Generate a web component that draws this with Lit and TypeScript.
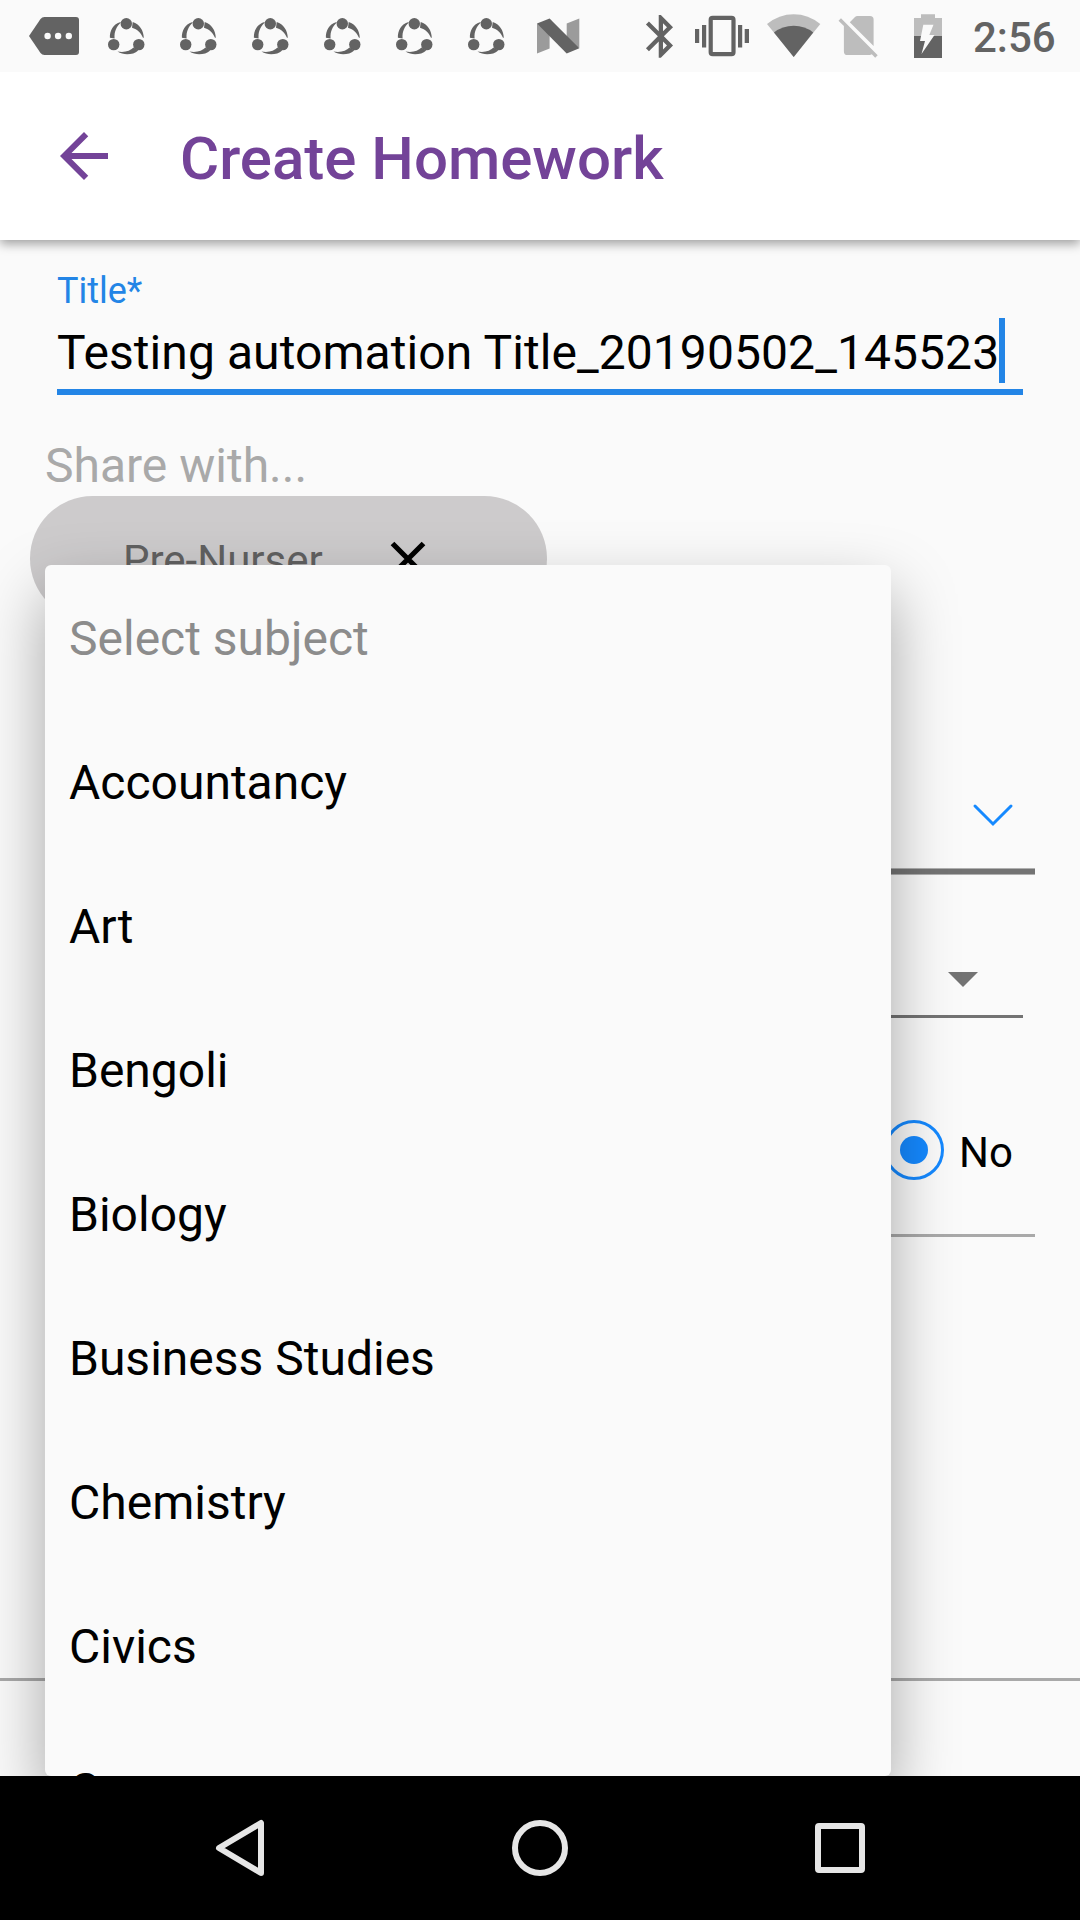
import { LitElement, html, css, svg } from "lit";
import { customElement } from "lit/decorators.js";

const subjects = [
  "Accountancy",
  "Art",
  "Bengoli",
  "Biology",
  "Business Studies",
  "Chemistry",
  "Civics",
  "Commerce",
];

const shareGlyph = (x: number) => svg`
  <g transform="translate(${x} 18)" fill="#636363">
    <circle cx="18.3" cy="5.8" r="5.7" />
    <circle cx="5.7" cy="26.6" r="5.7" />
    <circle cx="30.8" cy="26.6" r="5.7" />
    <path d="M12.600 3.900C5.200 6 1.600 12.500 1.900 19.800L6.600 20.400C6 13.500 8.600 8.400 12.600 4.700Z" />
    <path d="M24.700 4C31.500 6 35.600 12.500 35.800 19.800L35 19.800C32.800 14.800 29.500 11.200 24 9.800Z" />
    <path d="M9.500 33.600C16 37.600 25 37 30.200 32.400L25.600 29.600C22 33.200 17 34.600 9.500 33.600Z" />
  </g>`;

@customElement("status-bar")
class StatusBar extends LitElement {
  static styles = css`
    :host {
      display: block;
      height: 72px;
      background: #fafafa;
    }
    .row {
      display: flex;
      height: 72px;
    }
    .icons {
      flex: none;
      display: block;
    }
    .clock {
      font: 500 42px/72px Roboto, sans-serif;
      color: #636363;
      padding-top: 2px;
    }
  `;
  render() {
    return html`<div class="row">
      <svg class="icons" width="973" height="72" viewBox="0 0 973 72">
        <path
          fill="#636363"
          d="M29 36L40.500 19Q42 17 44.500 17H76Q79 17 79 20V52Q79 55 76 55H44.500Q42 55 40.500 53Z"
        />
        <g fill="#fafafa">
          <circle cx="47.600" cy="36" r="3.200" />
          <circle cx="58.100" cy="36" r="3.200" />
          <circle cx="68.800" cy="36" r="3.200" />
        </g>
        ${[108, 180, 252, 324, 396, 468].map(shareGlyph)}
        <path fill="#9b9b9b" d="M537 23.500L549.600 30V48.500L537 53.500ZM566.700 23.500L579.300 18.500V48L566.700 42Z" />
        <path fill="#636363" d="M537 23.500L549.600 18.500L579.300 48.300L566.700 53.500Z" />
        <path
          fill="#636363"
          transform="translate(635.300 10.800) scale(2.130)"
          d="M17.710 7.710L12 2h-1v7.590L6.410 5 5 6.410 10.590 12 5 17.590 6.410 19 11 14.410V22h1l5.710-5.710-4.300-4.290 4.300-4.290zM13 5.830l1.880 1.880L13 9.590V5.830zm1.880 10.460L13 18.170v-3.760l1.880 1.880z"
        />
        <path fill="#636363" d="M695 29h4.200v14H695zM702 25h4.200v22.500H702zM738 25h4.200v22.500H738zM744.700 29h4.300v14H744.700z" />
        <rect x="710.700" y="17.900" width="22.800" height="36.300" rx="2" fill="none" stroke="#636363" stroke-width="4.200" />
        <path fill="#bdbdbd" d="M793.700 57L767 24Q779 14.200 793.700 14.200T820.300 24Z" />
        <path fill="#636363" d="M793.700 57L774 32.500Q782.500 25.800 793.700 25.800T813.200 32.500Z" />
        <g fill="#bdbdbd">
          <path d="M849.800 22.200L855 17Q856 16 857.500 16H870Q873.600 16 873.600 19.600V46Z" />
          <path d="M838.500 20.700L841 18.200L877.700 55.200L875.200 57.800L871.800 54.300Q871 55 869.500 55H847.500Q843.900 55 843.900 51.400V26Z" />
        </g>
        <path fill="#bdbdbd" d="M914 18H921V14.200H935V18H942V36H914Z" />
        <path fill="#636363" d="M914 36H942V58H914Z" />
        <path fill="#fafafa" d="M923.300 24.800H933.500L929.300 35H934.500L921.500 54L925 41H920Z" />
      </svg>
      <div class="clock">2:56</div>
    </div>`;
  }
}

@customElement("app-bar")
class AppBar extends LitElement {
  static styles = css`
    :host {
      display: flex;
      align-items: center;
      height: 168px;
      padding-left: 48px;
      box-sizing: border-box;
      background: #fff;
      box-shadow: 0 4px 10px rgba(0, 0, 0, 0.36);
      font-family: Roboto, sans-serif;
    }
    .title {
      margin-left: 60px;
      padding-top: 6px;
      font-size: 60px;
      line-height: 72px;
      font-weight: 500;
      color: #734398;
    }
  `;
  render() {
    return html`
      <svg width="72" height="72" viewBox="0 0 24 24">
        <path fill="#734398" d="M20 11H7.830l5.590-5.590L12 4l-8 8 8 8 1.410-1.410L7.830 13H20v-2z" />
      </svg>
      <div class="title">Create Homework</div>
    `;
  }
}

@customElement("nav-bar")
class NavBar extends LitElement {
  static styles = css`
    :host {
      display: flex;
      align-items: center;
      justify-content: center;
      gap: 228px;
      height: 144px;
      background: #000;
    }
    .icon {
      display: block;
    }
  `;
  render() {
    return html`
      <svg class="icon" width="72" height="72" viewBox="0 0 72 72">
        <path
          d="M15 36L57 11V61Z"
          fill="none"
          stroke="#e6e6e6"
          stroke-width="6"
          stroke-linejoin="round"
        />
      </svg>
      <svg class="icon" width="72" height="72" viewBox="0 0 72 72">
        <circle cx="36" cy="36" r="25" fill="none" stroke="#e6e6e6" stroke-width="6" />
      </svg>
      <svg class="icon" width="72" height="72" viewBox="0 0 72 72">
        <rect x="14" y="14" width="44" height="44" rx="1" fill="none" stroke="#e6e6e6" stroke-width="6" />
      </svg>
    `;
  }
}

@customElement("subject-menu")
class SubjectMenu extends LitElement {
  static styles = css`
    :host {
      display: block;
      background: #fafafa;
      border-radius: 6px;
      box-shadow: 0 28px 64px rgba(0, 0, 0, 0.34);
    }
    .list {
      height: 100%;
      overflow: hidden;
      border-radius: 6px;
    }
    .item {
      height: 144px;
      padding: 2px 24px 0;
      font: 48px/144px Roboto, sans-serif;
      box-sizing: border-box;
      color: #000;
    }
    .hint {
      color: #8c8c8c;
    }
  `;
  render() {
    return html`<div class="list">
      <div class="item hint">Select subject</div>
      ${subjects.map((s) => html`<div class="item">${s}</div>`)}
    </div>`;
  }
}

@customElement("app-root")
class AppRoot extends LitElement {
  static styles = css`
    :host {
      display: block;
      width: 1080px;
      height: 1920px;
      overflow: hidden;
      background: #fafafa;
      font-family: Roboto, sans-serif;
    }
    .screen {
      position: relative;
      display: flex;
      flex-direction: column;
      height: 1920px;
    }
    status-bar,
    nav-bar {
      position: relative;
      z-index: 2;
      flex: none;
    }
    app-bar {
      flex: none;
    }
    .form {
      flex: 1;
      min-height: 0;
      display: flex;
      flex-direction: column;
    }
    .field {
      margin: 0 57px;
      padding-top: 29px;
      height: 155px;
      box-sizing: border-box;
      border-bottom: 6px solid #2385e6;
    }
    .label {
      font-size: 36px;
      line-height: 44px;
      color: #2385e6;
    }
    .value {
      display: flex;
      align-items: center;
      margin-top: 5px;
      height: 65px;
      font-size: 48px;
      color: #000;
      white-space: nowrap;
    }
    .value-text {
      padding-top: 4px;
      letter-spacing: 0.08px;
    }
    .caret {
      width: 6px;
      height: 65px;
      background: #2385e6;
    }
    .share {
      margin: 41px 45px 0;
      height: 60px;
      font-size: 48px;
      line-height: 60px;
      color: #a9a9a9;
    }
    .chip {
      margin-left: 30px;
      width: 517px;
      height: 125px;
      border-radius: 63px;
      background: #cdcbcc;
      display: flex;
      align-items: center;
      box-sizing: border-box;
      padding-left: 93px;
      color: #616161;
      font-size: 42px;
    }
    .chip-text {
      width: 201px;
      padding-top: 3px;
    }
    .chip-close {
      margin-left: 63px;
    }
    .right {
      display: flex;
      flex-direction: column;
      align-items: flex-end;
    }
    .picker {
      margin-top: 143px;
      height: 104px;
      width: 990px;
      margin-right: 45px;
      display: flex;
      justify-content: flex-end;
      align-items: center;
      box-sizing: border-box;
      padding: 0 21px 3px 0;
    }
    .picker-line {
      width: 990px;
      height: 7px;
      box-sizing: border-box;
      margin-right: 45px;
      background: #737373;
      border-top: 1px solid #b0b0b0;
      border-bottom: 1px solid #b0b0b0;
    }
    .spinner {
      width: 966px;
      margin-right: 57px;
      height: 143px;
      box-sizing: border-box;
      border-bottom: 3px solid #737373;
      display: flex;
      justify-content: flex-end;
      align-items: flex-end;
      padding: 0 45px 28px 0;
    }
    .radio {
      width: 990px;
      margin-right: 45px;
      height: 219px;
      box-sizing: border-box;
      border-bottom: 3px solid #a9a9a9;
      display: flex;
      justify-content: flex-end;
      align-items: center;
      padding: 48px 22px 0 0;
      font-size: 42px;
      color: #000;
    }
    .radio-label {
      margin-left: 15px;
      padding-top: 5px;
    }
    .divider {
      margin-top: 441px;
      height: 3px;
      background: #a9a9a9;
    }
    .menu {
      position: absolute;
      z-index: 1;
      left: 45px;
      top: 565px;
      width: 846px;
      height: 1211px;
    }
  `;
  render() {
    return html`<div class="screen">
      <status-bar></status-bar>
      <app-bar></app-bar>
      <div class="form">
        <div class="field">
          <div class="label">Title*</div>
          <div class="value"><span class="value-text">Testing automation Title_20190502_145523</span><span class="caret"></span></div>
        </div>
        <div class="share">Share with...</div>
        <div class="chip">
          <span class="chip-text">Pre-Nurser</span>
          <svg class="chip-close" width="42" height="42" viewBox="0 0 42 42">
            <path d="M5.500 5.500L36.500 36.500M36.500 5.500L5.500 36.500" stroke="#000" stroke-width="5.200" />
          </svg>
        </div>
        <div class="right">
          <div class="picker">
            <svg width="42" height="24" viewBox="0 0 42 24">
              <path d="M3 3L21 21L39 3" fill="none" stroke="#1589ff" stroke-width="3" stroke-linecap="round" />
            </svg>
          </div>
          <div class="picker-line"></div>
          <div class="spinner">
            <svg width="30" height="15" viewBox="0 0 30 15"><path d="M0 0H30L15 15Z" fill="#737373" /></svg>
          </div>
          <div class="radio">
            <svg width="60" height="60" viewBox="0 0 60 60">
              <circle cx="30" cy="30" r="28.500" fill="none" stroke="#1589ff" stroke-width="3" />
              <circle cx="30" cy="30" r="14" fill="#1589ff" />
            </svg>
            <span class="radio-label">No</span>
          </div>
        </div>
        <div class="divider"></div>
      </div>
      <subject-menu class="menu"></subject-menu>
      <nav-bar></nav-bar>
    </div>`;
  }
}
